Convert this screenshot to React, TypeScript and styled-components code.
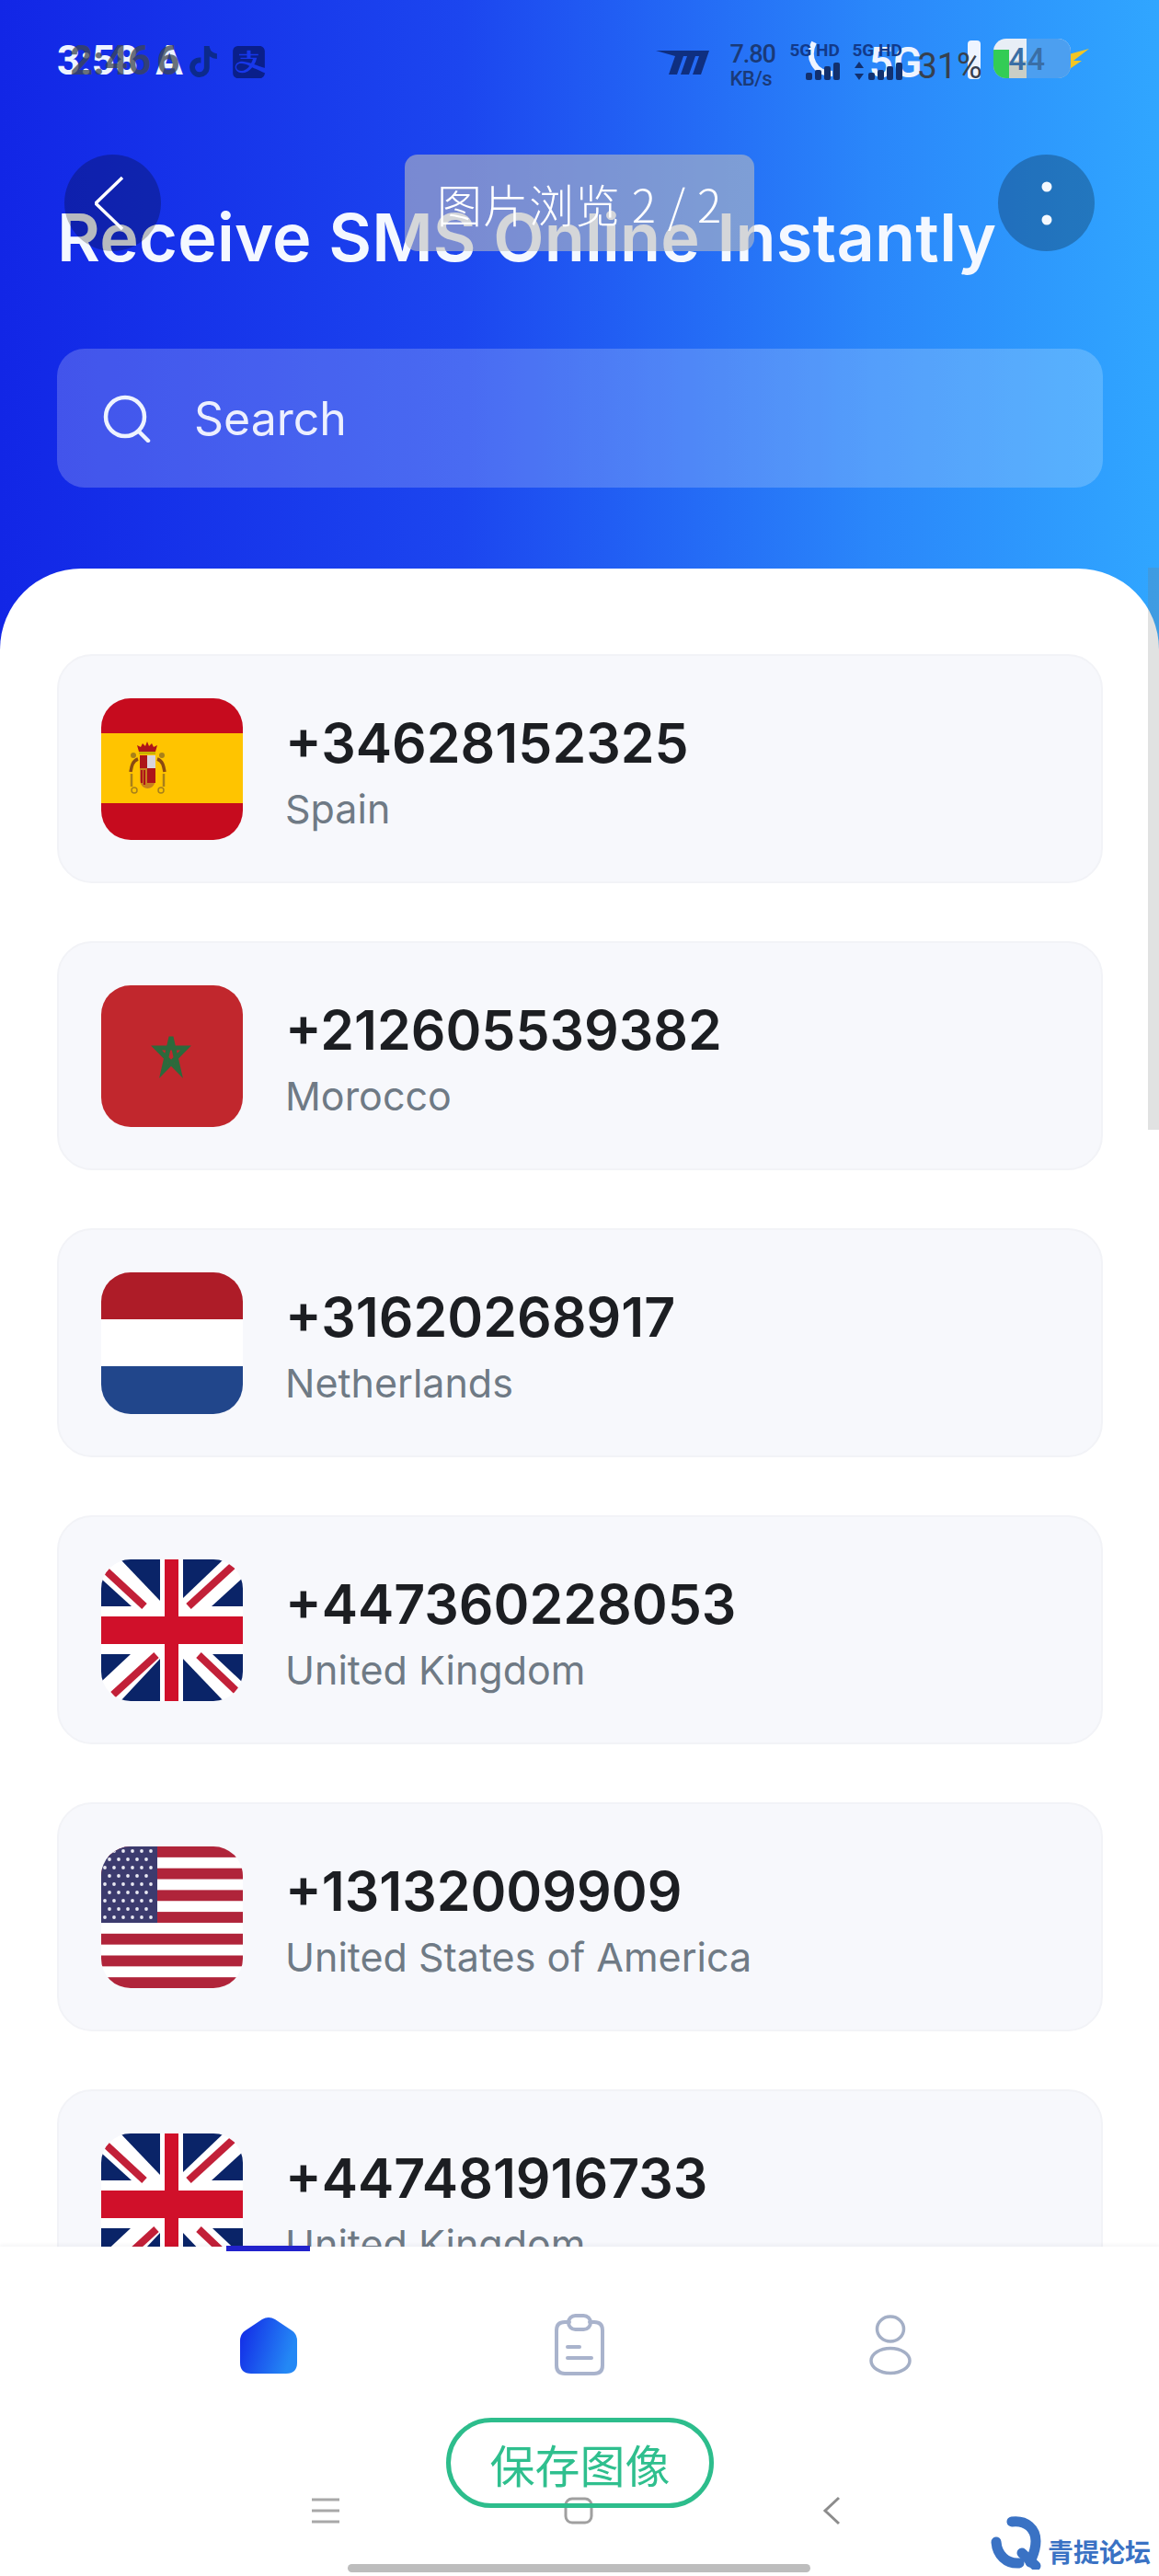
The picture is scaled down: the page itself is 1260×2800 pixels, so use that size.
import { type ReactElement } from 'react';
import styled, { createGlobalStyle } from 'styled-components';
import { FaTiktok } from 'react-icons/fa';
import { SiAlipay } from 'react-icons/si';

const GlobalStyle = createGlobalStyle`
  html, body {
    margin: 0;
    padding: 0;
    background: #fff;
    font-family: Inter, "Noto Sans CJK SC", sans-serif;
  }
`;

const Page = styled.div`
  position: relative;
  width: 1260px;
  height: 2800px;
  overflow: hidden;
  display: flex;
  flex-direction: column;
  background: linear-gradient(90deg, #1226e6 0%, #1c46ef 40%, #2a86fa 75%, #30a6ff 100%);
`;

const Header = styled.header`
  height: 618px;
  flex: none;
  box-sizing: border-box;
  padding: 216px 61px 0 62px;
`;

const Title = styled.h1`
  margin: 0;
  height: 84px;
  font-size: 72px;
  line-height: 84px;
  letter-spacing: 0.2px;
  font-weight: 600;
  color: #f4f8ff;
  white-space: nowrap;
`;

const SearchBar = styled.div`
  margin-top: 79px;
  height: 151px;
  border-radius: 30px;
  display: flex;
  align-items: center;
  gap: 47px;
  padding-left: 50px;
  background: rgba(255, 255, 255, 0.2);
`;

const SearchText = styled.span`
  font-size: 50px;
  color: rgba(255, 255, 255, 0.9);
`;

const Sheet = styled.main`
  flex: 1;
  min-height: 0;
  overflow: hidden;
  box-sizing: border-box;
  padding: 93px 61px 0 62px;
  background: #fff;
  border-radius: 88px 88px 0 0;
  display: flex;
  flex-direction: column;
  gap: 63px;
`;

const Card = styled.article`
  flex: none;
  height: 249px;
  box-sizing: border-box;
  display: flex;
  align-items: center;
  gap: 46px;
  padding-left: 46px;
  border: 2px solid #f2f3f7;
  border-radius: 38px;
  background: #f7f8fc;
`;

const FlagBox = styled.div`
  flex: none;
  width: 154px;
  height: 154px;
  border-radius: 32px;
  overflow: hidden;

  svg {
    display: block;
  }
`;

const CardText = styled.div`
  display: flex;
  flex-direction: column;
  gap: 10px;
  padding-top: 6px;
`;

const Phone = styled.div`
  font-size: 59px;
  line-height: 70px;
  font-weight: 600;
  color: #1c1e22;
`;

const Country = styled.div`
  font-size: 43px;
  line-height: 52px;
  color: #6f7a85;
`;

const BottomNav = styled.nav`
  position: relative;
  flex: none;
  height: 358px;
  box-sizing: border-box;
  padding-top: 73px;
  background: #fff;
  box-shadow: 0 -2px 4px rgba(30, 40, 70, 0.05);
  display: flex;
  flex-direction: column;
`;

const Indicator = styled.div`
  position: absolute;
  top: -1px;
  left: 246px;
  width: 91px;
  height: 6px;
  background: #2222cc;
`;

const Tabs = styled.div`
  display: grid;
  grid-template-columns: repeat(3, 338px);
  padding-left: 123px;
  height: 67px;
`;

const Tab = styled.div`
  display: flex;
  justify-content: center;
  align-items: center;
`;

const SystemKeys = styled.div`
  margin-top: 131px;
  display: grid;
  grid-template-columns: repeat(3, 275px);
  padding-left: 216px;
  height: 30px;
`;

const SystemKey = styled.div`
  display: flex;
  justify-content: center;
  align-items: center;
`;

const HomeBar = styled.div`
  margin: 44px 0 0 378px;
  width: 503px;
  height: 9px;
  border-radius: 5px;
  background: #bdbdbd;
`;

const StatusLayer = styled.div<{ $dark?: boolean }>`
  position: absolute;
  top: 0;
  left: 0;
  width: 1260px;
  height: 110px;
  display: flex;
  align-items: flex-start;
  padding-top: 44px;
  box-sizing: border-box;
  font-family: Roboto, "Liberation Sans", sans-serif;
  color: ${(p) => (p.$dark ? '#1a3a78' : '#eef4ff')};
`;

const Clock = styled.span<{ $at: number; $dark?: boolean }>`
  margin-left: ${(p) => p.$at}px;
  font-size: 44px;
  line-height: 44px;
  font-weight: 700;
  color: ${(p) => (p.$dark ? '#3d4650' : 'inherit')};
  opacity: ${(p) => (p.$dark ? 0.75 : 1)};
  white-space: nowrap;
`;

const TrayIcon = styled.span<{ $at: number; $top?: number }>`
  margin-left: ${(p) => p.$at}px;
  margin-top: ${(p) => p.$top ?? 4}px;
  line-height: 0;
`;

const Speed = styled.div`
  margin-left: 22px;
  width: 52px;
  display: flex;
  flex-direction: column;
  font-weight: 500;
  line-height: 1;
  padding-top: 2px;
`;

const SpeedValue = styled.span`
  font-size: 27px;
  letter-spacing: -1px;
`;

const SpeedUnit = styled.span`
  font-size: 22px;
  margin-top: 2px;
  letter-spacing: -0.5px;
`;

const NetworkBlock = styled.div<{ $at: number }>`
  margin-left: ${(p) => p.$at}px;
  width: 58px;
  padding-top: 3px;
  display: flex;
  flex-direction: column;
  align-items: flex-end;
  gap: 4px;
`;

const NetworkLabel = styled.span`
  align-self: flex-start;
  font-size: 19px;
  line-height: 16px;
  font-weight: 700;
  color: #123a8a;
  white-space: nowrap;
`;

const Percent = styled.span`
  margin: 12px 0 0 13px;
  font-size: 38px;
  line-height: 32px;
  color: #37404e;
  white-space: nowrap;
`;

const GhostFiveG = styled.span`
  margin: 4px 0 0 38px;
  font-size: 46px;
  line-height: 40px;
  font-weight: 600;
  white-space: nowrap;
`;

const GhostBars = styled.span`
  margin: 0 0 0 50px;
  width: 14px;
  height: 42px;
  border-radius: 4px;
  background: #eef4ff;
`;

const Battery = styled.div`
  position: relative;
  margin-left: 14px;
  margin-top: -2px;
  flex: none;
  width: 84px;
  height: 43px;
  border-radius: 14px;
  overflow: hidden;
  background: linear-gradient(180deg, #e8eef6 0%, #e8eef6 55%, #c9cec6 56%, #c9cec6 100%);
`;

const BatteryFill = styled.div`
  position: absolute;
  left: 0;
  bottom: 0;
  width: 17px;
  height: 31px;
  background: #33cc55;
`;

const BatteryGlass = styled.div`
  position: absolute;
  top: 0;
  right: 0;
  width: 48px;
  height: 43px;
  background: #4c9ff0;
`;

const BatteryText = styled.span`
  position: absolute;
  left: 16px;
  top: 5px;
  font-size: 34px;
  line-height: 34px;
  letter-spacing: 1px;
  font-weight: 500;
  color: #3a6ea5;
`;

const RoundButton = styled.button<{ $left: number }>`
  position: absolute;
  top: 168px;
  left: ${(p) => p.$left}px;
  width: 105px;
  height: 105px;
  padding: 0;
  border: 0;
  border-radius: 50%;
  background: rgba(0, 0, 0, 0.25);
  display: flex;
  align-items: center;
  justify-content: center;
`;

const ViewerPill = styled.div`
  position: absolute;
  top: 168px;
  left: 440px;
  width: 380px;
  height: 105px;
  border-radius: 14px;
  background: rgba(190, 190, 190, 0.58);
  display: flex;
  align-items: center;
  justify-content: center;
  font-family: "Noto Sans CJK SC", sans-serif;
  font-size: 49px;
  letter-spacing: 1px;
  font-weight: 300;
  color: #fff;
  white-space: nowrap;
`;

const PageScrollbar = styled.div`
  position: absolute;
  top: 617px;
  right: 0;
  width: 12px;
  height: 611px;
  background: rgba(120, 125, 125, 0.22);
`;

const SaveButton = styled.button`
  position: absolute;
  left: 485px;
  top: 2628px;
  width: 291px;
  height: 98px;
  box-sizing: border-box;
  padding: 0;
  border: 5px solid #2dbd8c;
  border-radius: 49px;
  background: transparent;
  font-family: "Noto Sans CJK SC", sans-serif;
  font-size: 49px;
  font-weight: 400;
  color: #2fbf8e;
`;

const Watermark = styled.div`
  position: absolute;
  left: 1076px;
  top: 2735px;
  display: flex;
  align-items: flex-end;
  gap: 6px;
`;

const WatermarkText = styled.span`
  font-family: "Noto Sans CJK SC", sans-serif;
  font-size: 28px;
  line-height: 36px;
  font-weight: 700;
  color: #3a72c4;
  white-space: nowrap;
  margin-bottom: 2px;
`;

function SpainFlag(): ReactElement {
  return (
    <svg width='154' height='154' viewBox='0 0 154 154'>
      <rect width='154' height='154' fill='#c60b1e' />
      <rect y='38' width='154' height='76' fill='#ffc400' />
      <path d='M41 58h18l2-7-4 2-2-4-3 3-2-5-2 5-3-3-2 4-4-2z' fill='#ad1519' />
      <rect x='41' y='58' width='18' height='3' fill='#c8b100' />
      <path d='M42 62h17v26c0 6-4 10-8.500 10S42 94 42 88z' fill='#c8801e' />
      <rect x='42' y='62' width='8' height='14' fill='#ad1519' />
      <rect x='50' y='62' width='9' height='14' fill='#d8d4dc' />
      <rect x='50' y='76' width='9' height='16' fill='#ad1519' />
      <path d='M44 78v14M47 78v16' stroke='#ad1519' strokeWidth='2' />
      <path d='M40 66c-6 2-7 8-8 14M61 66c6 2 7 8 8 14' stroke='#8a4a12' strokeWidth='3.500' fill='none' />
      <path d='M33 82v14M68 82v14' stroke='#a8801a' strokeWidth='2.500' />
      <circle cx='36' cy='100' r='3' fill='none' stroke='#a8801a' strokeWidth='1.500' />
      <circle cx='65' cy='100' r='3' fill='none' stroke='#a8801a' strokeWidth='1.500' />
      <circle cx='35' cy='62' r='3' fill='#a8801a' />
      <circle cx='66' cy='62' r='3' fill='#a8801a' />
    </svg>
  );
}

function MoroccoFlag(): ReactElement {
  return (
    <svg width='154' height='154' viewBox='0 0 154 154'>
      <rect width='154' height='154' fill='#c1272d' />
      <path
        d='M76 56 L84.500 93 L60 68 H92 L67.500 93 Z'
        fill='none'
        stroke='#2c6a3c'
        strokeWidth='5'
        strokeLinejoin='miter'
      />
    </svg>
  );
}

function NetherlandsFlag(): ReactElement {
  return (
    <svg width='154' height='154' viewBox='0 0 154 154'>
      <rect width='154' height='51' fill='#ae1c28' />
      <rect y='51' width='154' height='51' fill='#fff' />
      <rect y='102' width='154' height='52' fill='#21468b' />
    </svg>
  );
}

function UkFlag(): ReactElement {
  return (
    <svg width='154' height='154' viewBox='0 0 154 154'>
      <rect width='154' height='154' fill='#fff' />
      <g fill='#0a2468'>
        <polygon points='21,0 64,0 64,45' />
        <polygon points='89,0 133,0 89,42' />
        <polygon points='154,20 154,51 120,51' />
        <polygon points='0,21 33,51 0,51' />
        <polygon points='0,103 32,103 0,133' />
        <polygon points='21,154 64,154 64,108' />
        <polygon points='89,108 133,154 89,154' />
        <polygon points='154,103 154,134 121,103' />
      </g>
      <g stroke='#c22038' strokeWidth='8'>
        <line x1='6' y1='13' x2='47' y2='51' />
        <line x1='95' y1='51' x2='143' y2='7' />
        <line x1='13' y1='147' x2='60' y2='104' />
        <line x1='106' y1='104' x2='147' y2='143' />
      </g>
      <rect x='69' width='15' height='154' fill='#d0102a' />
      <rect y='62' width='154' height='30' fill='#d0102a' />
    </svg>
  );
}

function UsFlag(): ReactElement {
  const stripes = [0, 2, 4, 6, 8, 10, 12];
  const starRows = [0, 1, 2, 3, 4, 5, 6, 7, 8];
  return (
    <svg width='154' height='154' viewBox='0 0 154 154'>
      <rect width='154' height='154' fill='#fff' />
      {stripes.map((n) => (
        <rect key={n} y={n * 11.85} width='154' height='11.850' fill='#b0243a' />
      ))}
      <rect width='61' height='83' fill='#3c3b6e' />
      {starRows.map((r) =>
        [0, 1, 2, 3, 4, 5].map((c) => (
          <circle
            key={`${r}-${c}`}
            cx={(r % 2 ? 9 : 4) + c * 10}
            cy={5 + r * 9}
            r='1.900'
            fill={r % 2 && c === 5 ? 'none' : '#e8e8f2'}
          />
        )),
      )}
    </svg>
  );
}

const rows = [
  { phone: '+34628152325', country: 'Spain', flag: <SpainFlag /> },
  { phone: '+212605539382', country: 'Morocco', flag: <MoroccoFlag /> },
  { phone: '+31620268917', country: 'Netherlands', flag: <NetherlandsFlag /> },
  { phone: '+447360228053', country: 'United Kingdom', flag: <UkFlag /> },
  { phone: '+13132009909', country: 'United States of America', flag: <UsFlag /> },
  { phone: '+447481916733', country: 'United Kingdom', flag: <UkFlag /> },
];

function Signal({ arrows }: { arrows?: boolean }): ReactElement {
  return (
    <svg width='56' height='20' viewBox='0 0 56 20' fill='#12306e'>
      {arrows && <path d='M6 0l5 7H1zM6 20l5-7H1z' />}
      <rect x='16' y='12' width='7' height='8' rx='2' />
      <rect x='26' y='9' width='7' height='11' rx='2' />
      <rect x='36' y='5' width='7' height='15' rx='2' />
      <rect x='46' y='1' width='7' height='19' rx='2' />
    </svg>
  );
}

function App(): ReactElement {
  return (
    <Page>
      <GlobalStyle />
      <Header>
        <Title>Receive SMS Online Instantly</Title>
        <SearchBar>
          <svg width='52' height='52' viewBox='0 0 52 52' fill='none' stroke='#eef3ff' strokeWidth='4.500' strokeLinecap='round'>
            <circle cx='24' cy='24' r='21' />
            <line x1='39' y1='40' x2='49' y2='50' />
          </svg>
          <SearchText>Search</SearchText>
        </SearchBar>
      </Header>

      <Sheet>
        {rows.map((row) => (
          <Card key={row.phone}>
            <FlagBox>{row.flag}</FlagBox>
            <CardText>
              <Phone>{row.phone}</Phone>
              <Country>{row.country}</Country>
            </CardText>
          </Card>
        ))}
      </Sheet>

      <BottomNav>
        <Indicator />
        <Tabs>
          <Tab>
            <svg width='62' height='62' viewBox='0 0 62 62'>
              <defs>
                <linearGradient id='homeFill' x1='0' x2='1' y1='0' y2='0.3'>
                  <stop offset='0' stopColor='#1226e6' />
                  <stop offset='1' stopColor='#2488f5' />
                </linearGradient>
              </defs>
              <path
                d='M24 3 Q31 -1 38 3 L56 15 Q62 19 62 26 V50 Q62 62 50 62 H12 Q0 62 0 50 V26 Q0 19 6 15 Z'
                fill='url(#homeFill)'
              />
            </svg>
          </Tab>
          <Tab>
            <svg width='56' height='68' viewBox='0 0 56 68' fill='none' stroke='#a9b3cc' strokeWidth='4' strokeLinecap='round'>
              <path d='M17 9 H12 Q3 9 3 18 V56 Q3 65 12 65 H44 Q53 65 53 56 V18 Q53 9 44 9 H39' />
              <rect x='16' y='2' width='24' height='15' rx='7.500' />
              <line x1='15' y1='36' x2='28' y2='36' />
              <line x1='15' y1='48' x2='41' y2='48' />
            </svg>
          </Tab>
          <Tab>
            <svg width='46' height='66' viewBox='0 0 46 66' fill='none' stroke='#a4afc6' strokeWidth='3.500'>
              <ellipse cx='23' cy='15.500' rx='14.500' ry='13.500' />
              <ellipse cx='23' cy='50' rx='21' ry='13.500' />
            </svg>
          </Tab>
        </Tabs>
        <SystemKeys>
          <SystemKey>
            <svg width='30' height='28' viewBox='0 0 30 28' stroke='#a8a8a8' strokeWidth='3'>
              <line x1='0' y1='2' x2='30' y2='2' />
              <line x1='0' y1='14' x2='30' y2='14' />
              <line x1='0' y1='26' x2='30' y2='26' />
            </svg>
          </SystemKey>
          <SystemKey>
            <svg width='32' height='30' viewBox='0 0 32 30' fill='none' stroke='#a0a0a0' strokeWidth='3'>
              <rect x='2' y='2' width='28' height='26' rx='7' />
            </svg>
          </SystemKey>
          <SystemKey>
            <svg width='20' height='32' viewBox='0 0 20 32' fill='none' stroke='#8c8c8c' strokeWidth='3'>
              <polyline points='18,2 3,16 18,30' />
            </svg>
          </SystemKey>
        </SystemKeys>
        <HomeBar />
      </BottomNav>

      <StatusLayer>
        <Clock $at={62}>3:58</Clock>
        <Clock $at={19}>A</Clock>
        <TrayIcon $at={678} $top={0}>
          <svg width='30' height='40' viewBox='0 0 30 40' fill='none' stroke='#eef4ff' strokeWidth='6'>
            <path d='M8 2 C0 18 8 36 28 36' />
          </svg>
        </TrayIcon>
        <GhostFiveG>5G</GhostFiveG>
        <GhostBars />
        <Battery>
          <BatteryFill />
          <BatteryGlass />
          <BatteryText>44</BatteryText>
        </Battery>
        <TrayIcon $at={-12} $top={9}>
          <svg width='32' height='28' viewBox='0 0 32 28' fill='#f2c523'>
            <path d='M32 0 L10 6 L4 20 L12 17 L2 28 L24 13 L15 13 Z' />
          </svg>
        </TrayIcon>
      </StatusLayer>

      <StatusLayer $dark>
        <Clock $at={76} $dark>
          2:46
        </Clock>
        <Clock $at={6} $dark>
          6
        </Clock>
        <TrayIcon $at={9} $top={6}>
          <FaTiktok size={34} color='#0c2a8c' />
        </TrayIcon>
        <TrayIcon $at={15} $top={6}>
          <SiAlipay size={35} color='#0a1f8a' />
        </TrayIcon>
        <TrayIcon $at={425} $top={11}>
          <svg width='58' height='26' viewBox='0 0 58 26' fill='#0f2f80'>
            <path d='M0 0 H58 L49 26 H40 L47 6 H43 L36 26 H27 L34 6 H30 L23 26 H14 L21 6 Z' />
          </svg>
        </TrayIcon>
        <Speed>
          <SpeedValue>7.80</SpeedValue>
          <SpeedUnit>KB/s</SpeedUnit>
        </Speed>
        <NetworkBlock $at={13}>
          <NetworkLabel>5G HD</NetworkLabel>
          <Signal />
        </NetworkBlock>
        <NetworkBlock $at={10}>
          <NetworkLabel>5G HD</NetworkLabel>
          <Signal arrows />
        </NetworkBlock>
        <Percent>31%</Percent>
      </StatusLayer>

      <RoundButton $left={70}>
        <svg width='40' height='60' viewBox='0 0 40 60' fill='none' stroke='#fff' strokeWidth='3.500'>
          <polyline points='30,2 1,30 30,58' />
        </svg>
      </RoundButton>
      <ViewerPill>图片浏览 2 / 2</ViewerPill>
      <RoundButton $left={1085}>
        <svg width='12' height='48' viewBox='0 0 12 48' fill='#f4f8ff'>
          <circle cx='6' cy='6' r='5.500' />
          <circle cx='6' cy='42' r='5.500' />
        </svg>
      </RoundButton>

      <PageScrollbar />
      <SaveButton>保存图像</SaveButton>

      <Watermark>
        <svg width='57' height='58' viewBox='0 0 57 58' fill='none' stroke='#3a72c4' strokeWidth='11' strokeLinecap='round'>
          <path d='M24 6 C40 4 50 14 50 27 C50 38 46 44 44 50' />
          <path d='M7 28 C8 42 18 52 32 51' />
          <path d='M35 40 L50 54' />
        </svg>
        <WatermarkText>青提论坛</WatermarkText>
      </Watermark>
    </Page>
  );
}

export default App;
